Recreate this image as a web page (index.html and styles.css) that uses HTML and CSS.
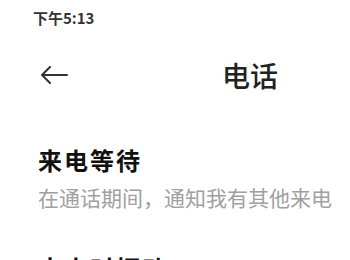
FILE: index.html
```html
<!DOCTYPE html>
<html>
<head>
<meta charset="utf-8">
<link rel="stylesheet" href="styles.css">
</head>
<body>
<div class="screen">
  <div class="status">下午5:13</div>
  <div class="appbar">
    <svg class="back" width="28" height="18" viewBox="0 0 28 18">
      <path d="M27 9H2M10 1L2 9L10 17" fill="none" stroke="#333" stroke-width="2" stroke-linecap="round" stroke-linejoin="round"/>
    </svg>
    <div class="title">电话</div>
  </div>
  <div class="list">
    <div class="item">
      <div class="item-title">来电等待</div>
      <div class="item-sub">在通话期间，通知我有其他来电</div>
    </div>
    <div class="item">
      <div class="item-title">来电时振动</div>
    </div>
  </div>
</div>
</body>
</html>
```
FILE: styles.css
```css
html, body {
  margin: 0;
  padding: 0;
  background: #fff;
}
.screen {
  width: 350px;
  height: 260px;
  overflow: hidden;
  font-family: "Noto Sans CJK SC", "Noto Sans", sans-serif;
}
.status {
  padding: 8px 0 0 33px;
  height: 22px;
  font-size: 15px;
  font-weight: 700;
  color: #333;
  line-height: 20px;
}
.appbar {
  display: flex;
  align-items: center;
  height: 46px;
  margin-top: 22px;
  padding-left: 40px;
}
.back {
  flex: none;
}
.title {
  margin-left: 154px;
  font-size: 28px;
  font-weight: 500;
  color: #222;
}
.list {
  display: flex;
  flex-direction: column;
  gap: 42px;
  padding: 46px 0 0 38px;
}
.item-title {
  font-size: 24px;
  font-weight: 700;
  color: #111;
  line-height: 32px;
  letter-spacing: 2px;
}
.item-sub {
  margin-top: 8px;
  font-size: 21px;
  color: #a0a0a0;
  line-height: 26px;
}
```
